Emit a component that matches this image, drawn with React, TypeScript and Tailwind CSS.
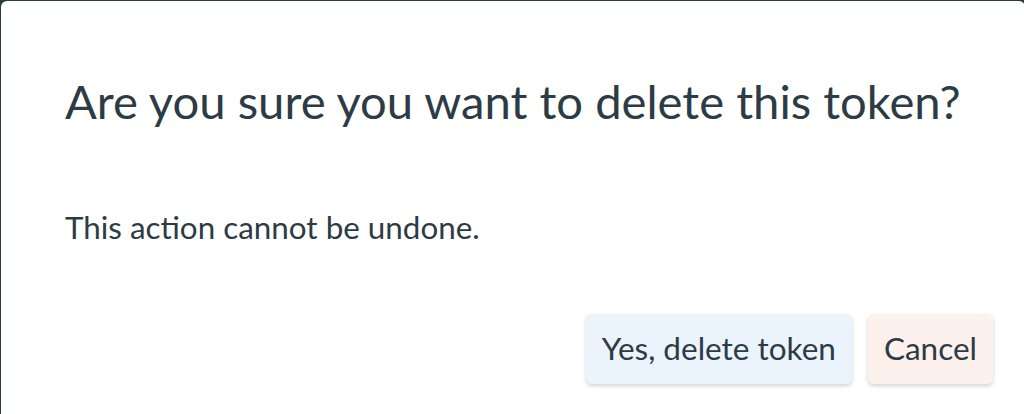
export default function App() {
  return (
    <div className="h-[414px] w-[1024px] overflow-hidden bg-[#2d3b45] pl-px pt-px" style={{ fontFamily: 'Lato, "Liberation Sans", sans-serif' }}>
      <div className="flex h-[420px] w-[1024px] flex-col rounded-md bg-white px-16 text-[#2d3b45]">
        <h2 className="mt-[76px] text-[47.2px] font-normal leading-none tracking-normal">
          Are you sure you want to delete this token?
        </h2>
        <p className="mt-[88px] text-[31.4px] leading-none">This action cannot be undone.</p>
        <div className="mr-[-32px] mt-[70px] flex justify-end gap-4">
          <button className="h-[70px] rounded-md bg-[#ebf4fd] px-4 text-[31.5px] text-[#2d3b45] shadow-[0_2px_4px_rgba(0,0,0,0.18)]">
            Yes, delete token
          </button>
          <button className="h-[70px] rounded-md bg-[#fdf1ed] px-4 text-[31.5px] text-[#2d3b45] shadow-[0_2px_4px_rgba(0,0,0,0.18)]">
            Cancel
          </button>
        </div>
      </div>
    </div>
  )
}
